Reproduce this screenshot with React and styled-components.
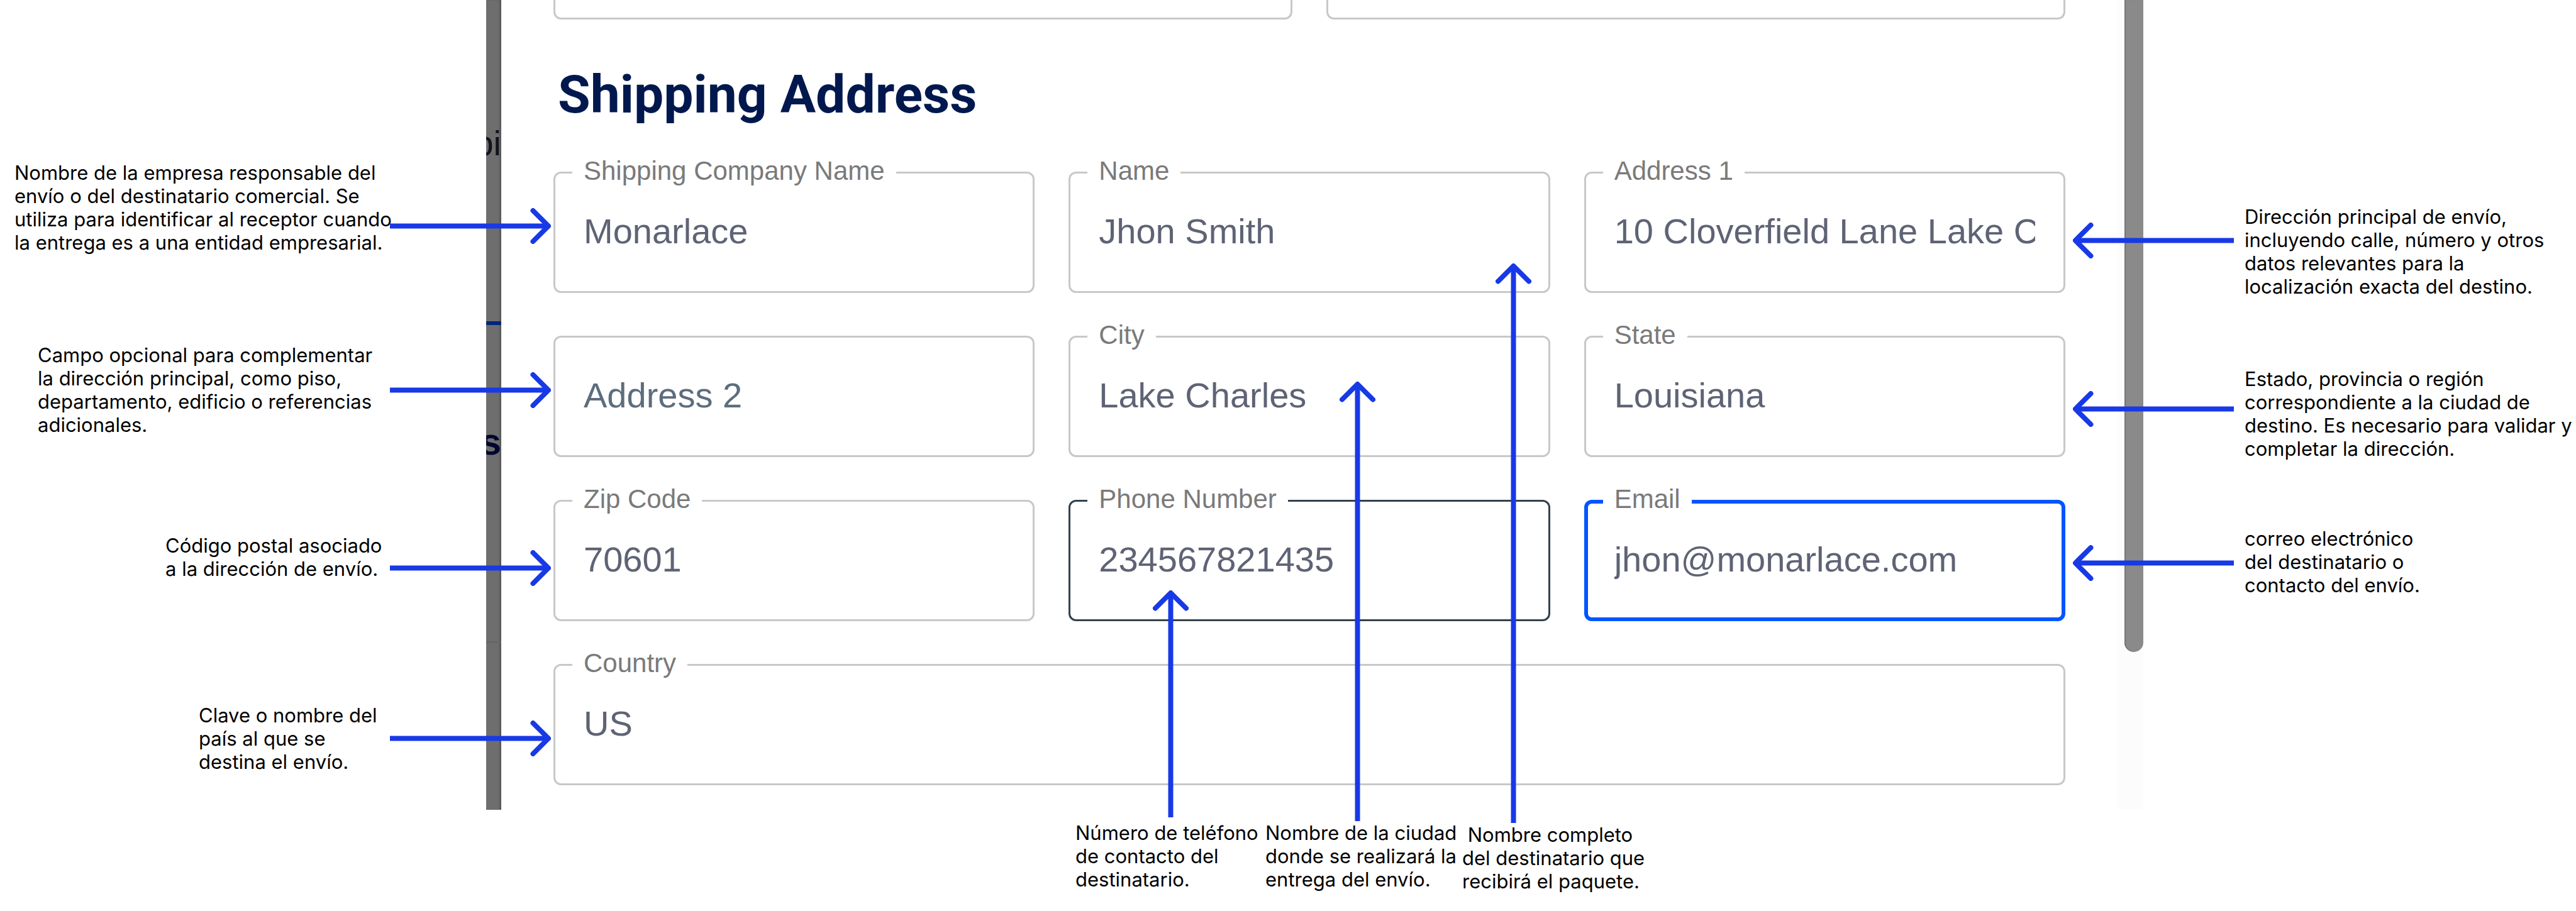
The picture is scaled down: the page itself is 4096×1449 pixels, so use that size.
import React, { useId } from "react";
import styled, { createGlobalStyle, css } from "styled-components";

const ink = "#1839e6";
const paper = "#ffffff";

const GlobalStyle = createGlobalStyle`
  *, *::before, *::after { box-sizing: border-box; }
  body { margin: 0; background: #ffffff; }
`;

const Page = styled.main`
  display: grid;
  grid-template-columns: 773px 24px minmax(0, 1fr) 41px 688px;
  grid-template-rows: 1288px auto;
  min-height: 100vh;
  font-family: Inter, sans-serif;
`;

/* Notes */

const NoteColumn = styled.aside`
  position: relative;
`;

const Note = styled.p`
  position: absolute;
  top: ${(p) => p.$top}px;
  left: ${(p) => p.$left}px;
  margin: 0;
  color: #000000;
  font: 400 31px/37px Inter, sans-serif;
  white-space: pre;
`;

const ArrowSvg = styled.svg`
  position: absolute;
  z-index: 2;
  top: ${(p) => p.$top}px;
  left: ${(p) => p.$left}px;
  fill: none;
  stroke: ${ink};
  stroke-width: 8;
  pointer-events: none;

  path {
    stroke-linecap: round;
    stroke-linejoin: round;
  }
`;

/* Dimmed page seen beside the dialog */

const Backdrop = styled.div`
  display: flex;
  flex-direction: column;
  align-items: flex-end;
  overflow: hidden;
  background: #6e6e6e;
  box-shadow: inset -3px 0 2px #5a5a5a;
  font-family: "Liberation Sans", Arial, sans-serif;
`;

const BackdropText = styled.span`
  margin-top: ${(p) => p.$gap}px;
  color: ${(p) => (p.$strong ? "#02062e" : "#10131c")};
  font-size: ${(p) => (p.$strong ? 60 : 56)}px;
  font-weight: ${(p) => (p.$strong ? 700 : 400)};
  line-height: 64px;
`;

const BackdropRule = styled.div`
  flex: none;
  width: 100%;
  height: ${(p) => (p.$accent ? 6 : 3)}px;
  margin-top: ${(p) => p.$gap}px;
  background: ${(p) => (p.$accent ? "#00267a" : "#666666")};
`;

/* Dialog */

const Dialog = styled.section`
  position: relative;
  padding: 0 83px;
  background: ${paper};
  font-family: "Liberation Sans", Arial, sans-serif;
`;

const FieldGrid = styled.div`
  display: grid;
  grid-template-columns: repeat(${(p) => p.$columns}, minmax(0, 1fr));
  gap: 68px 54px;
`;

const PreviousField = styled.div`
  height: 31px;
  border: 3px solid #c8c8c8;
  border-top: 0;
  border-radius: 0 0 12px 12px;
`;

const Title = styled.h2`
  margin: 70px 0 72px 7px;
  color: #00184e;
  font: 700 84px/100px Roboto, sans-serif;
`;

const borders = {
  idle: css`
    --edge: 3px;
    border: 3px solid #c8c8c8;
  `,
  hover: css`
    --edge: 3px;
    border: 3px solid #33414c;
  `,
  focus: css`
    --edge: 6px;
    border: 6px solid #0055ff;
  `,
};

const FieldBox = styled.div`
  position: relative;
  height: 193px;
  border-radius: 12px;
  grid-column: ${(p) => (p.$wide ? "1 / -1" : "auto")};
  ${(p) => borders[p.$state]}
`;

const FieldLabel = styled.label`
  position: absolute;
  top: calc(-25px - var(--edge));
  left: calc(30px - var(--edge));
  padding: 0 18px;
  background: ${paper};
  color: #7a7a7a;
  font-size: 42px;
  line-height: 48px;
`;

const FieldInput = styled.input`
  display: block;
  width: calc(100% - 96px + 2 * var(--edge));
  height: 100%;
  margin: 0 calc(48px - var(--edge));
  padding: 0 0 4px;
  border: 0;
  outline: 0;
  background: transparent;
  color: #5e6375;
  font: 400 56px "Liberation Sans", Arial, sans-serif;

  &::placeholder {
    color: #5c6d7d;
    opacity: 1;
  }
`;

/* Scroll bar */

const Track = styled.div`
  padding-left: 11px;
  background: #fcfcfc;
`;

const Thumb = styled.div`
  height: 1037px;
  border-radius: 0 0 15px 15px;
  background: #8a8a8a;
  box-shadow: inset 2px 0 1px #757575;
`;

function Arrow({ dir, top, left, length = 256 }) {
  const vertical = dir === "up";
  const w = vertical ? 57 : length;
  const h = vertical ? length : 57;
  const tip = length - 4;
  const shapes = {
    right: (
      <>
        <line x1="0" y1="28.5" x2={tip} y2="28.5" />
        <path d={`M${tip - 24.5} 4 L${tip} 28.5 L${tip - 24.5} 53`} />
      </>
    ),
    left: (
      <>
        <line x1="4" y1="28.5" x2={length} y2="28.5" />
        <path d="M28.5 4 L4 28.5 L28.5 53" />
      </>
    ),
    up: (
      <>
        <line x1="28.5" y1="4" x2="28.5" y2={length} />
        <path d="M4 28.5 L28.5 4 L53 28.5" />
      </>
    ),
  };
  return (
    <ArrowSvg $top={top} $left={left} width={w} height={h} viewBox={`0 0 ${w} ${h}`} aria-hidden="true">
      {shapes[dir]}
    </ArrowSvg>
  );
}

function Field({ label, value, placeholder, type = "text", state = "idle", wide }) {
  const id = useId();
  return (
    <FieldBox $state={state} $wide={wide}>
      {label && <FieldLabel htmlFor={id}>{label}</FieldLabel>}
      <FieldInput
        id={id}
        type={type}
        defaultValue={value}
        placeholder={placeholder}
        aria-label={label ? undefined : placeholder}
      />
    </FieldBox>
  );
}

const leftNotes = [
  {
    top: 256,
    left: 23,
    text: "Nombre de la empresa responsable del\nenvío o del destinatario comercial. Se\nutiliza para identificar al receptor cuando\nla entrega es a una entidad empresarial.",
    arrow: 331,
  },
  {
    top: 546,
    left: 60,
    text: "Campo opcional para complementar\nla dirección principal, como piso,\ndepartamento, edificio o referencias\nadicionales.",
    arrow: 592,
  },
  { top: 849, left: 263, text: "Código postal asociado\na la dirección de envío.", arrow: 875 },
  { top: 1119, left: 316, text: "Clave o nombre del\npaís al que se\ndestina el envío.", arrow: 1146 },
];

const rightNotes = [
  {
    top: 326,
    text: "Dirección principal de envío,\nincluyendo calle, número y otros\ndatos relevantes para la\nlocalización exacta del destino.",
    arrow: 354,
  },
  {
    top: 584,
    text: "Estado, provincia o región\ncorrespondiente a la ciudad de\ndestino. Es necesario para validar y\ncompletar la dirección.",
    arrow: 622,
  },
  { top: 838, text: "correo electrónico\ndel destinatario o\ncontacto del envío.", arrow: 867 },
];

const lowerNotes = [
  {
    top: 1306,
    left: 913,
    text: "Número de teléfono\nde contacto del\ndestinatario.",
    arrow: { top: 939, left: 1036, length: 361 },
  },
  {
    top: 1306,
    left: 1215,
    text: "Nombre de la ciudad\ndonde se realizará la\nentrega del envío.",
    arrow: { top: 607, left: 1333, length: 699 },
  },
  {
    top: 1309,
    left: 1528,
    text: " Nombre completo\ndel destinatario que\nrecibirá el paquete.",
    arrow: { top: 419, left: 1581, length: 890 },
  },
];

export default function App() {
  return (
    <>
      <GlobalStyle />
      <Page>
        <NoteColumn>
          {leftNotes.map((n) => (
            <React.Fragment key={n.top}>
              <Note $top={n.top} $left={n.left}>{n.text}</Note>
              <Arrow dir="right" top={n.arrow} left={620} />
            </React.Fragment>
          ))}
        </NoteColumn>

        <Backdrop aria-hidden="true">
          <BackdropText $gap={196}>pi</BackdropText>
          <BackdropRule $accent $gap={251} />
          <BackdropText $strong $gap={154}>s</BackdropText>
          <BackdropRule $gap={285} />
          <BackdropRule $gap={149} />
        </Backdrop>

        <Dialog>
          <FieldGrid $columns={2}>
            <PreviousField />
            <PreviousField />
          </FieldGrid>
          <Title>Shipping Address</Title>
          <FieldGrid as="form" $columns={3}>
            <Field label="Shipping Company Name" value="Monarlace" />
            <Field label="Name" value="Jhon Smith" />
            <Field label="Address 1" value="10 Cloverfield Lane Lake Charles" />
            <Field placeholder="Address 2" />
            <Field label="City" value="Lake Charles" />
            <Field label="State" value="Louisiana" />
            <Field label="Zip Code" value="70601" />
            <Field label="Phone Number" value="234567821435" type="tel" state="hover" />
            <Field label="Email" value="jhon@monarlace.com" type="email" state="focus" />
            <Field label="Country" value="US" wide />
          </FieldGrid>
          {lowerNotes.map((n) => (
            <React.Fragment key={n.left}>
              <Note $top={n.top} $left={n.left}>{n.text}</Note>
              <Arrow dir="up" {...n.arrow} />
            </React.Fragment>
          ))}
        </Dialog>

        <Track>
          <Thumb />
        </Track>

        <NoteColumn>
          {rightNotes.map((n) => (
            <React.Fragment key={n.top}>
              <Note $top={n.top} $left={161}>{n.text}</Note>
              <Arrow dir="left" top={n.arrow} left={-112} />
            </React.Fragment>
          ))}
        </NoteColumn>
      </Page>
    </>
  );
}
